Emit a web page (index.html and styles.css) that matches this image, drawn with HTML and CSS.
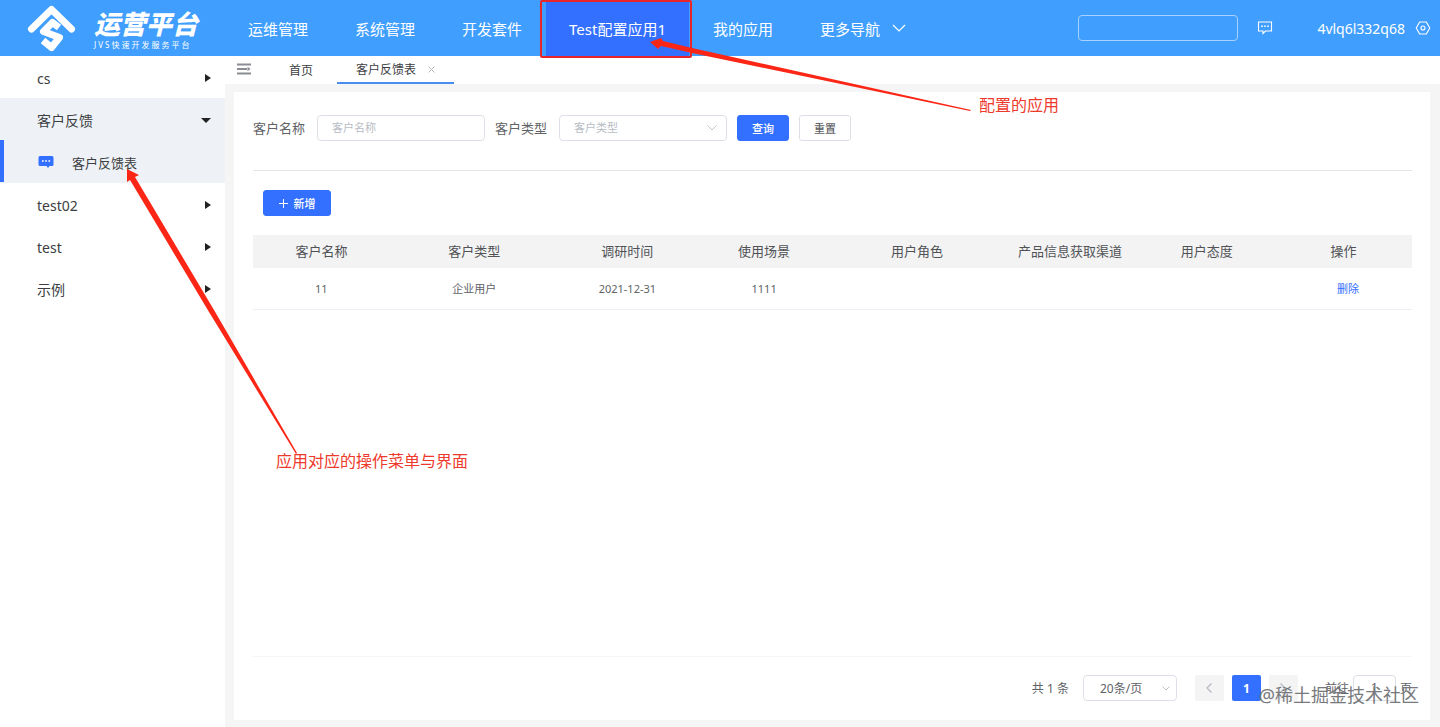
FILE: index.html
```html
<!DOCTYPE html>
<html lang="zh-CN">
    <head>
        <meta charset="utf-8">
        <title>运营平台</title>
        <link rel="stylesheet" href="styles.css">
    </head>
    <body>
        <header class="header">
            <a class="logo" href="#">
                <svg class="logo-icon" width="52" height="52" viewBox="0 0 52 52" fill="none" stroke="#fff" stroke-width="7" stroke-linejoin="round" stroke-linecap="round">
                    <path d="M5.500 27 25.500 7.500 45.500 27"/>
                    <path d="M33 25.500 26.500 20.500 17.500 29.500 33.500 35.500 25.500 45.500 17 38.500" stroke-linecap="butt"/>
                </svg>
                <span class="logo-text">
                    <span class="logo-title">运营平台</span>
                    <span class="logo-sub">JVS快速开发服务平台</span>
                </span>
            </a>
            <nav class="nav">
                <a href="#">运维管理</a>
                <a href="#">系统管理</a>
                <a href="#">开发套件</a>
                <a href="#" class="active">Test配置应用1<span class="mark-box"></span></a>
                <a href="#">我的应用</a>
                <a href="#">更多导航
                    <svg width="14" height="8" viewBox="0 0 14 8" fill="none" stroke="#fff" stroke-width="1.2"><path d="M1 1l6 6 6-6"/></svg>
                </a>
            </nav>
            <div class="user-bar">
                <input class="search" type="text" aria-label="搜索">
                <button class="icon-btn" type="button" aria-label="消息">
                    <svg width="16" height="14" viewBox="0 0 16 14" fill="none" stroke="#fff" stroke-width="1.1"><path d="M1.500 1h13v9H8.500L6 12.500V10H1.500z"/><path d="M4.200 5.300h1.600M7.200 5.300h1.600M10.200 5.300h1.600" stroke-width="1.500"/></svg>
                </button>
                <a class="user-name" href="#">4vlq6l332q68</a>
                <button class="icon-btn" type="button" aria-label="设置">
                    <svg width="16" height="14" viewBox="0 0 16 14" fill="none" stroke="#fff" stroke-width="1.1"><path d="M4.700 1h6.600L14.800 7l-3.500 6H4.700L1.200 7z" stroke-linejoin="round"/><circle cx="8" cy="7" r="2"/></svg>
                </button>
            </div>
        </header>

        <div class="layout">
            <aside class="sidebar">
                <a class="menu-item" href="#">cs<i class="arrow"></i></a>
                <div class="menu-open">
                    <a class="menu-item" href="#">客户反馈<i class="arrow down"></i></a>
                    <a class="menu-item sub" href="#">
                        <svg width="16" height="14" viewBox="0 0 16 14"><path d="M2 1h12q1.500 0 1.500 1.500v7Q15.500 11 14 11h-2.500L10 13 8.500 11H2Q.5 11 .5 9.500v-7Q.5 1 2 1z" fill="#3370ff"/><path d="M4 6h1.700M7.200 6h1.700M10.400 6h1.700" stroke="#fff" stroke-width="1.600"/></svg>
                        客户反馈表
                    </a>
                </div>
                <a class="menu-item" href="#">test02<i class="arrow"></i></a>
                <a class="menu-item" href="#">test<i class="arrow"></i></a>
                <a class="menu-item" href="#">示例<i class="arrow"></i></a>
            </aside>

            <main class="main">
                <div class="tabs">
                    <button class="collapse" type="button" aria-label="收起菜单">
                        <svg width="16" height="12" viewBox="0 0 16 12" fill="none" stroke="#8a8d94" stroke-width="2"><path d="M1 1.500h14M1 6h10M1 10.500h14"/><path d="M11.500 3.800 14.500 6l-3 2.200z" fill="#8a8d94" stroke="none"/></svg>
                    </button>
                    <a class="tab" href="#">首页</a>
                    <a class="tab current" href="#">客户反馈表
                        <svg width="7" height="7" viewBox="0 0 7 7" stroke="#b4b7bd"><path d="M.5.5l6 6M6.500.5l-6 6"/></svg>
                    </a>
                </div>

                <section class="card">
                    <form class="filter">
                        <label for="customerName">客户名称</label>
                        <input class="field" id="customerName" type="text" placeholder="客户名称">
                        <label for="customerType">客户类型</label>
                        <span class="select-wrap">
                            <select class="field" id="customerType">
                                <option>客户类型</option>
                            </select>
                            <svg width="10" height="6" viewBox="0 0 10 6" fill="none" stroke="#c0c4cc"><path d="M.5.5 5 5 9.500.5"/></svg>
                        </span>
                        <button class="btn primary" type="button">查询</button>
                        <button class="btn" type="button">重置</button>
                    </form>

                    <div class="toolbar">
                        <button class="btn primary add" type="button">
                            <svg width="9" height="9" viewBox="0 0 9 9" stroke="#fff"><path d="M4.500 0v9M0 4.500h9"/></svg>
                            新增
                        </button>
                    </div>

                    <table class="table">
                        <colgroup>
                            <col><col class="wide"><col><col><col class="wide"><col><col><col>
                        </colgroup>
                        <thead>
                            <tr>
                                <th>客户名称</th>
                                <th>客户类型</th>
                                <th>调研时间</th>
                                <th>使用场景</th>
                                <th>用户角色</th>
                                <th>产品信息获取渠道</th>
                                <th>用户态度</th>
                                <th>操作</th>
                            </tr>
                        </thead>
                        <tbody>
                            <tr>
                                <td>11</td>
                                <td>企业用户</td>
                                <td>2021-12-31</td>
                                <td>1111</td>
                                <td></td>
                                <td></td>
                                <td></td>
                                <td class="action"><a href="#">删除</a></td>
                            </tr>
                        </tbody>
                    </table>

                    <div class="pagination">
                        <span class="total">共 1 条</span>
                        <span class="select-wrap size">
                            <select class="field" aria-label="每页条数">
                                <option>20条/页</option>
                            </select>
                            <svg width="8" height="5" viewBox="0 0 8 5" fill="none" stroke="#c0c4cc"><path d="M.5.5 4 4 7.500.5"/></svg>
                        </span>
                        <button class="page-btn" type="button" aria-label="上一页" disabled>
                            <svg width="6" height="10" viewBox="0 0 6 10" fill="none" stroke="#b4b8bf" stroke-width="1.200"><path d="M5.500.5 1 5l4.500 4.500"/></svg>
                        </button>
                        <button class="page-btn on" type="button">1</button>
                        <button class="page-btn" type="button" aria-label="下一页" disabled>
                            <svg width="6" height="10" viewBox="0 0 6 10" fill="none" stroke="#b4b8bf" stroke-width="1.200"><path d="M.5.5 5 5 .5 9.500"/></svg>
                        </button>
                        <span class="jump">
                            <label for="jumpPage">前往</label>
                            <input class="field jump-input" id="jumpPage" type="text" value="1">
                            <span>页</span>
                        </span>
                    </div>
                    <span class="watermark">@稀土掘金技术社区</span>
                </section>
            </main>
        </div>

        <!-- callouts over the page -->
        <svg class="callout-arrow to-nav" width="322" height="74" viewBox="650 38 322 74" fill="#fb2616"><path d="M650 42 661 38 663 41 692 48 971 110 970 111 692 53 661 46 658 49z"/></svg>
        <span class="callout nav-note">配置的应用</span>
        <svg class="callout-arrow to-menu" width="172" height="286" viewBox="126 168 172 286" fill="#fb2616"><path d="M127 169 139 175 135 177 214 310 297 453 296 454 209 312 130 180 127 182z"/></svg>
        <span class="callout menu-note">应用对应的操作菜单与界面</span>
    </body>
</html>
```
FILE: styles.css
```css
* {
    box-sizing: border-box;
}
body {
    margin: 0;
    min-height: 100vh;
    display: flex;
    flex-direction: column;
    position: relative;
    background: #fff;
    color: #3c3e42;
    font-family: "Noto Sans", "Noto Sans CJK SC", sans-serif;
    font-size: 13px;
}
a {
    color: inherit;
    text-decoration: none;
}
button, input, select {
    font-family: inherit;
    margin: 0;
}
svg {
    flex: none;
}

/* header */
.header {
    height: 56px;
    display: flex;
    align-items: center;
    background: #409eff;
    color: #fff;
}
.logo {
    width: 225px;
    display: flex;
    align-items: center;
    gap: 16px;
    padding-left: 26px;
}
.logo-text {
    display: flex;
    flex-direction: column;
    padding-top: 4px;
    white-space: nowrap;
}
.logo-title {
    font-size: 26px;
    line-height: 30px;
    font-weight: 900;
    font-style: italic;
}
.logo-sub {
    font-size: 8px;
    line-height: 12px;
    letter-spacing: 2px;
}
.nav {
    display: flex;
    gap: 1px;
    height: 100%;
    font-size: 15px;
}
.nav a {
    display: flex;
    align-items: center;
    gap: 12px;
    padding: 0 23px;
    white-space: nowrap;
}
.nav .active {
    position: relative;
    background: #3370ff;
}
.mark-box {
    position: absolute;
    top: 0;
    left: -6px;
    right: -3px;
    bottom: -2px;
    border: 2px solid #e8262a;
    border-radius: 2px;
}
.user-bar {
    margin-left: auto;
    padding-right: 9px;
    display: flex;
    align-items: center;
    font-size: 14px;
}
.search {
    width: 160px;
    height: 26px;
    padding: 0 10px;
    background: transparent;
    border: 1px solid #a6d2ff;
    border-radius: 4px;
    color: #fff;
}
.icon-btn {
    display: flex;
    padding: 0;
    border: none;
    background: none;
}
.search + .icon-btn {
    margin: 0 44px 0 19px;
}
.user-name {
    padding-right: 10px;
}

/* side menu */
.layout {
    flex: 1;
    display: flex;
}
.sidebar {
    width: 225px;
    flex: none;
}
.menu-item {
    height: 42px;
    display: flex;
    align-items: center;
    justify-content: space-between;
    padding: 2px 14px 0 37px;
    font-size: 14px;
}
.menu-open {
    padding-bottom: 1px;
    background: #eef2f7;
}
.menu-item.sub {
    justify-content: flex-start;
    gap: 18px;
    border-left: 4px solid #3370ff;
    padding-left: 34px;
    font-size: 13px;
}
.arrow {
    border-left: 6px solid #222;
    border-top: 4px solid transparent;
    border-bottom: 4px solid transparent;
}
.arrow.down {
    border: 5px solid transparent;
    border-top-color: #222;
    border-bottom: none;
}

/* content */
.main {
    flex: 1;
    min-width: 0;
    display: flex;
    flex-direction: column;
    background: #f5f5f5;
}
.tabs {
    height: 28px;
    display: flex;
    background: #fff;
    padding-left: 11px;
    font-size: 12px;
}
.collapse {
    border: none;
    background: none;
    padding: 0;
    margin-right: 18px;
}
.tab {
    display: flex;
    align-items: center;
    gap: 12px;
    padding: 0 19px;
}
.tab:not(.current) {
    margin-right: 5px;
}
.tab.current {
    border-bottom: 2px solid #4a8cf0;
}
.card {
    flex: 1;
    position: relative;
    display: flex;
    flex-direction: column;
    margin: 8px 10px 7px 9px;
    padding: 23px 18px 19px 19px;
    background: #fff;
}
.filter {
    display: flex;
    align-items: center;
    gap: 10px;
    padding-bottom: 29px;
    border-bottom: 1px solid #e4e4e4;
    color: #606266;
}
.filter label {
    width: 54px;
    padding-bottom: 2px;
    white-space: nowrap;
}
.field {
    width: 168px;
    height: 26px;
    padding: 0 14px 1px;
    border: 1px solid #dcdfe6;
    border-radius: 4px;
    background: #fff;
    color: #606266;
    font-size: 11px;
    appearance: none;
}
.field::placeholder {
    color: #b8bcc4;
}
.filter select {
    color: #b8bcc4;
}
.select-wrap {
    display: flex;
    align-items: center;
    position: relative;
}
.select-wrap svg {
    position: absolute;
    right: 10px;
    pointer-events: none;
}
.btn {
    width: 52px;
    height: 26px;
    display: flex;
    align-items: center;
    justify-content: center;
    gap: 6px;
    padding: 0;
    border: 1px solid #dcdfe6;
    border-radius: 3px;
    background: #fff;
    color: #606266;
    font-size: 11px;
    font-weight: 500;
}
.btn.primary {
    background: #3370ff;
    border-color: #3370ff;
    color: #fff;
}
.toolbar {
    padding: 19px 10px;
}
.btn.add {
    width: 68px;
}
.table {
    width: 100%;
    table-layout: fixed;
    border-collapse: collapse;
    text-align: center;
}
.wide {
    width: 14.6%;
}
.table th {
    height: 33px;
    padding: 0 0 2px;
    background: #f3f3f3;
    color: #505256;
    font-size: 13px;
    font-weight: 400;
}
.table td {
    height: 41px;
    padding: 0;
    border-bottom: 1px solid #ebeef5;
    color: #606266;
    font-size: 11px;
}
.table .action {
    padding-left: 9px;
    color: #3370ff;
}

/* pagination */
.pagination {
    margin-top: auto;
    padding-top: 18px;
    border-top: 1px solid #f5f5f5;
    display: flex;
    align-items: center;
    justify-content: flex-end;
    gap: 8px;
    color: #606266;
    font-size: 12px;
}
.total {
    margin-right: 6px;
}
.size {
    margin-right: 10px;
}
.size .field {
    width: 94px;
    padding: 0 16px;
    font-size: 12px;
}
.select-wrap.size svg {
    right: 7px;
}
.page-btn {
    width: 29px;
    height: 26px;
    display: flex;
    align-items: center;
    justify-content: center;
    padding: 0;
    border: none;
    border-radius: 2px;
    background: #f4f4f5;
    font-size: 12px;
    font-weight: 700;
}
.page-btn.on {
    background: #3370ff;
    color: #fff;
}
.jump {
    display: flex;
    align-items: center;
    gap: 4px;
    margin-left: 19px;
}
.jump-input {
    width: 43px;
    text-align: center;
    font-size: 12px;
}
.watermark {
    position: absolute;
    right: 11px;
    bottom: 12px;
    color: #77797c;
    font-size: 18px;
    line-height: 26px;
}

/* callouts */
.callout, .callout-arrow {
    position: absolute;
    pointer-events: none;
}
.callout {
    color: #ee3a2c;
    font-size: 16px;
    line-height: 24px;
    white-space: nowrap;
}
.to-nav {
    left: 650px;
    top: 38px;
}
.nav-note {
    left: 979px;
    top: 93px;
}
.to-menu {
    left: 126px;
    top: 168px;
}
.menu-note {
    left: 276px;
    top: 449px;
}
```
